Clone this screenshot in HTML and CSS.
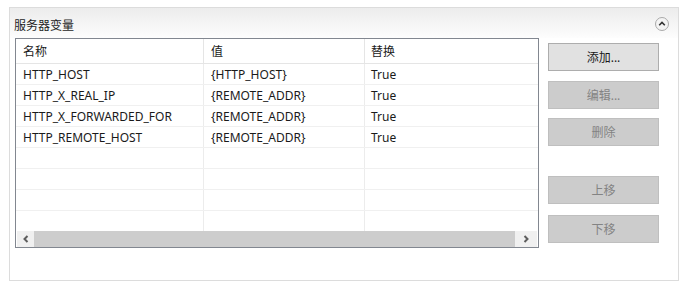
FILE: index.html
```html
<!DOCTYPE html>
<html lang="zh-CN">
<head>
  <meta charset="UTF-8" />
  <title>服务器变量</title>
  <link rel="stylesheet" href="styles.css">
</head>
<body>
  <div class="panel">
    <div class="panel-head">
      <span class="panel-title">服务器变量</span>
      <span class="collapse">
        <svg width="14" height="14" viewBox="0 0 14 14">
          <circle cx="7" cy="7" r="6.5" fill="#f4f4f4" stroke="#a9a9a9"/>
          <path d="M4.2 8.3 L7 5.5 L9.8 8.3" fill="none" stroke="#333" stroke-width="1.6"/>
        </svg>
      </span>
    </div>

    <div class="panel-body">
      <!-- variable list -->
      <div class="listbox">
        <div class="row head">
          <div class="cell c1">名称</div>
          <div class="cell c2">值</div>
          <div class="cell c3">替换</div>
        </div>
        <div class="row">
          <div class="cell c1">HTTP_HOST</div>
          <div class="cell c2">{HTTP_HOST}</div>
          <div class="cell c3">True</div>
        </div>
        <div class="row">
          <div class="cell c1">HTTP_X_REAL_IP</div>
          <div class="cell c2">{REMOTE_ADDR}</div>
          <div class="cell c3">True</div>
        </div>
        <div class="row">
          <div class="cell c1">HTTP_X_FORWARDED_FOR</div>
          <div class="cell c2">{REMOTE_ADDR}</div>
          <div class="cell c3">True</div>
        </div>
        <div class="row">
          <div class="cell c1">HTTP_REMOTE_HOST</div>
          <div class="cell c2">{REMOTE_ADDR}</div>
          <div class="cell c3">True</div>
        </div>
        <div class="row"><div class="cell c1"></div><div class="cell c2"></div><div class="cell c3"></div></div>
        <div class="row"><div class="cell c1"></div><div class="cell c2"></div><div class="cell c3"></div></div>
        <div class="row"><div class="cell c1"></div><div class="cell c2"></div><div class="cell c3"></div></div>
        <div class="row last"><div class="cell c1"></div><div class="cell c2"></div><div class="cell c3"></div></div>

        <div class="hscroll">
          <div class="arrow">
            <svg width="8" height="8" viewBox="0 0 8 8"><path d="M5.5 1 L2.5 4 L5.5 7" fill="none" stroke="#5d5d5d" stroke-width="2"/></svg>
          </div>
          <div class="thumb"></div>
          <div class="arrow right">
            <svg width="8" height="8" viewBox="0 0 8 8"><path d="M2.5 1 L5.5 4 L2.5 7" fill="none" stroke="#5d5d5d" stroke-width="2"/></svg>
          </div>
        </div>
      </div>

      <!-- actions -->
      <div class="actions">
        <button class="btn">添加...</button>
        <button class="btn off gap-lg" disabled>编辑...</button>
        <button class="btn off" disabled>删除</button>
        <button class="btn off gap-xl" disabled>上移</button>
        <button class="btn off gap-md" disabled>下移</button>
      </div>
    </div>
  </div>
</body>
</html>
```

FILE: styles.css
```css
* {
  margin: 0;
  padding: 0;
  box-sizing: border-box;
}
body {
  font-family: "Noto Sans", "Noto Sans CJK SC", sans-serif;
  font-size: 12px;
  color: #1a1a1a;
  background: #fff;
}
.panel {
  margin: 7px 0 0 9px;
  width: 670px;
  height: 274px;
  border: 1px solid #dcdcdc;
}
.panel-head {
  height: 30px;
  display: flex;
  align-items: center;
  justify-content: space-between;
  padding: 3px 9px 0 4px;
  background: linear-gradient(to bottom, #ececec, #fdfdfd);
}
.panel-title {
  font-size: 12px;
  color: #1e1e1e;
}
.collapse {
  display: flex;
  margin-top: -2px;
}
.panel-body {
  display: flex;
  padding: 0 5px;
}

.listbox {
  width: 524px;
  height: 210px;
  border: 1px solid #828790;
  display: flex;
  flex-direction: column;
}
.row {
  display: flex;
  height: 21px;
  border-bottom: 1px solid #f0f0f0;
}
.row.head {
  height: 25px;
  border-bottom-color: #e5e5e5;
}
.row.last {
  height: 20px;
  border-bottom: none;
}
.cell {
  display: flex;
  align-items: center;
  padding-left: 7px;
  white-space: nowrap;
  border-right: 1px solid #ececec;
}
.c1 { width: 188px; }
.c2 { width: 161px; }
.c3 { flex: 1; border-right: none; padding-left: 6px; }
.head .cell {
  padding-bottom: 1px;
  border-right-color: #e5e5e5;
}
.head .c3 { border-right: none; }

.hscroll {
  display: flex;
  height: 16px;
  background: #f0f0f0;
  margin: 0 1px;
}
.hscroll .arrow {
  width: 17px;
  display: flex;
  align-items: center;
  justify-content: center;
}
.hscroll .arrow.right {
  width: 22px;
}
.hscroll .thumb {
  flex: 1;
  background: #cdcdcd;
}

.actions {
  display: flex;
  flex-direction: column;
  margin-left: 9px;
  padding-top: 5px;
}
.btn {
  width: 111px;
  height: 28px;
  margin-top: 9px;
  font-family: inherit;
  font-size: 12px;
  color: #1a1a1a;
  background: #e1e1e1;
  border: 1px solid #adadad;
}
.btn:first-child { margin-top: 0; }
.btn.off {
  background: #cccccc;
  border-color: #bfbfbf;
  color: #838383;
}
.btn.gap-lg { margin-top: 10px; }
.btn.gap-xl { margin-top: 30px; }
.btn.gap-md { margin-top: 11px; }
```
